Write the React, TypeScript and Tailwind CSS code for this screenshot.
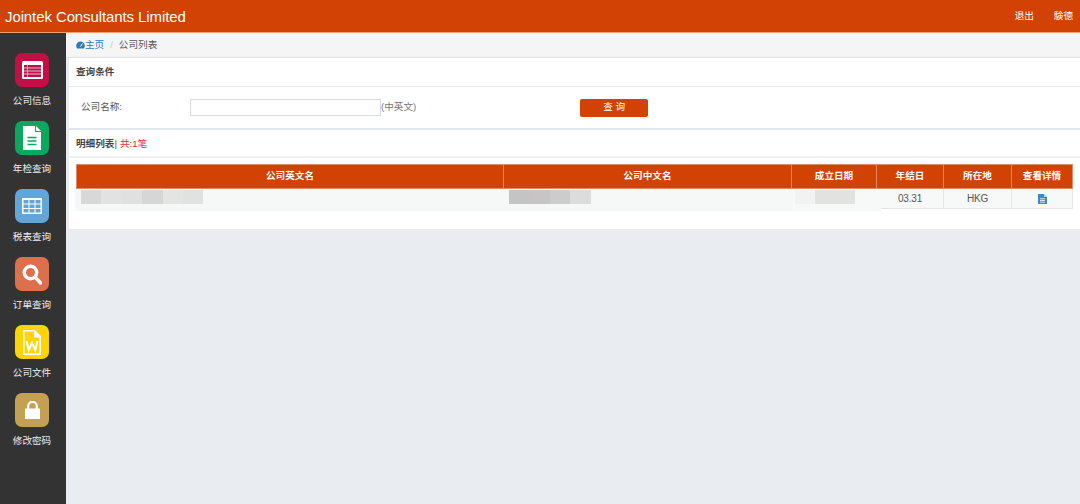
import type { ReactNode } from "react"

const FormIcon = () => (
  <svg width="21" height="18" viewBox="0 0 21 18">
    <rect width="21" height="18" rx="1.5" fill="#fff" />
    <rect x="2" y="4" width="17" height="12" fill="#c20f45" />
    <path d="M2 7h17M2 10h17M2 13h17" stroke="#f4b6c8" strokeWidth="1" />
    <path d="M5.5 4v12" stroke="#f4b6c8" strokeWidth="0.8" />
  </svg>
)

const DocIcon = () => (
  <svg width="18" height="24" viewBox="0 0 18 24">
    <path d="M0 0h12v6h6v18H0z" fill="#fff" />
    <path d="M13 0l5 5h-5z" fill="#fff" />
    <path d="M4.5 11.5h9M4.5 15h9M4.5 18.5h9" stroke="#0aa85e" strokeWidth="1.6" />
  </svg>
)

const GridIcon = () => (
  <svg width="20" height="16" viewBox="0 0 20 16">
    <rect width="20" height="16" rx="1" fill="#fff" />
    <path d="M1.5 2h5v3.5h-5zM7.5 2h5v3.5h-5zM13.5 2h5v3.5h-5zM1.5 6.5h5V10h-5zM7.5 6.5h5V10h-5zM13.5 6.5h5V10h-5zM1.5 11h5v3.5h-5zM7.5 11h5v3.5h-5zM13.5 11h5v3.5h-5z" fill="#62a6d8" />
  </svg>
)

const SearchIcon = () => (
  <svg width="20" height="21" viewBox="0 0 20 21" fill="none" stroke="#fff">
    <circle cx="8.5" cy="8.5" r="6.2" strokeWidth="3.4" />
    <path d="M13.5 13.5l5 5.5" strokeWidth="3.4" strokeLinecap="round" />
  </svg>
)

const WordIcon = () => (
  <svg width="18" height="25" viewBox="0 0 18 25" fill="none">
    <path d="M0.8 0.8h10.7l5.7 5.7v17.7H0.8z" stroke="#fff" strokeWidth="1.6" />
    <path d="M11 1v6.5h6.5z" fill="#fff" />
    <path d="M3.5 11l2.2 9 3.3-7 3.3 7 2.2-9" stroke="#fff" strokeWidth="2.1" />
  </svg>
)

const LockIcon = () => (
  <svg width="15" height="18" viewBox="0 0 15 18" fill="none">
    <path d="M3.2 9V5.2a4.3 4.3 0 0 1 8.6 0V9" stroke="#fff" strokeWidth="2.2" />
    <rect y="7.5" width="15" height="10.5" rx="0.5" fill="#fff" />
  </svg>
)

const GaugeIcon = () => (
  <svg width="9" height="8" viewBox="0 0 9 8">
    <path d="M4.5 0.5a4.3 4.3 0 0 0-4.3 4.3c0 1 .3 1.9.9 2.7h6.8c.6-.8.9-1.7.9-2.7A4.3 4.3 0 0 0 4.5 0.5z" fill="#337ab7" />
    <path d="M4.5 5.5L6.5 2.5" stroke="#fff" strokeWidth="1" />
  </svg>
)

const FileIcon = () => (
  <svg width="9" height="10" viewBox="0 0 9 10">
    <path d="M0 0h5.5L9 3.2V10H0z" fill="#3a8cc6" />
    <path d="M6 0l3 3H6z" fill="#a8cde8" />
    <path d="M2 4.8h5M2 6.5h5M2 8.2h5" stroke="#fff" strokeWidth="0.8" />
  </svg>
)

const navItems: { label: string; bg: string; icon: ReactNode }[] = [
  { label: "公司信息", bg: "bg-[#c20f45]", icon: <FormIcon /> },
  { label: "年检查询", bg: "bg-[#0aa85e]", icon: <DocIcon /> },
  { label: "税表查询", bg: "bg-[#62a6d8]", icon: <GridIcon /> },
  { label: "订单查询", bg: "bg-[#dc6f4c]", icon: <SearchIcon /> },
  { label: "公司文件", bg: "bg-[#ffd400]", icon: <WordIcon /> },
  { label: "修改密码", bg: "bg-[#c4a052]", icon: <LockIcon /> },
]

const columns = [
  { label: "公司英文名", width: "w-[427px]" },
  { label: "公司中文名", width: "w-[288px]" },
  { label: "成立日期", width: "w-[85px]" },
  { label: "年结日", width: "w-[67px]" },
  { label: "所在地", width: "w-[68px]" },
  { label: "查看详情", width: "w-[61px]" },
]

const Mosaic = ({ colors, cell }: { colors: string[]; cell: string }) => (
  <div className="flex h-[14px]">
    {colors.map((c, i) => (
      <div key={i} className={cell} style={{ backgroundColor: c }} />
    ))}
  </div>
)

const App = () => {
  return (
    <div className="flex h-[504px] w-[1080px] flex-col overflow-hidden bg-[#e9edf2] font-['Liberation_Sans','Noto_Sans_CJK_SC',sans-serif] text-[9.6px] text-[#555]">
      {/* Top bar */}
      <header className="flex h-[33px] shrink-0 items-center justify-between border-b border-[#e8a080] bg-[#d14204] pl-[5px] pr-[7px] text-white">
        <span className="text-[15px] leading-none tracking-[-0.1px]">Jointek Consultants Limited</span>
        <div className="flex gap-[20px]">
          <a>退出</a>
          <a>験徳</a>
        </div>
      </header>

      <div className="flex min-h-0 flex-1">
        {/* Sidebar */}
        <aside className="flex w-[66px] shrink-0 flex-col items-center gap-[13px] bg-[#333] pr-[2px] pt-[20px]">
          {navItems.map((item) => (
            <div key={item.label} className="flex flex-col items-center gap-[6px]">
              <div className={`flex h-[34px] w-[34px] items-center justify-center rounded-[7px] ${item.bg}`}>
                {item.icon}
              </div>
              <span className="h-[15px] leading-[15px] text-[#eee]">{item.label}</span>
            </div>
          ))}
        </aside>

        <main className="min-w-0 flex-1">
          {/* Breadcrumb */}
          <nav className="flex h-[25px] items-center border-b border-[#dcdfe6] bg-[#f5f5f5] pl-[10px] text-[#555]">
            <GaugeIcon />
            <span className="text-[#337ab7]">主页</span>
            <span className="ml-[6px] text-[#ccc]">/</span>
            <span className="ml-[6px]">公司列表</span>
          </nav>

          <div className="ml-[3px] h-[171px] bg-white">
            <div className="flex h-[29px] items-center border-b border-[#e6e8ee] pl-[7px] font-bold text-[#444]">
              查询条件
            </div>
            <div className="flex h-[43px] items-center border-b-2 border-[#e3e5ec] pl-[12px]">
              <span className="w-[109px]">公司名称:</span>
              <input className="h-[17px] w-[191px] border border-[#d6d9e0] bg-white" />
              <span className="text-[#777]">(中英文)</span>
              <button className="ml-[164px] h-[18px] w-[68px] rounded-[2px] bg-[#d14204] text-white">
                查 询
              </button>
            </div>
            <div className="flex h-[28px] items-center border-b-2 border-[#f0f1f5] pl-[7px] pt-[3px]">
              <span className="font-bold text-[#444]">明细列表</span>
              <span>|</span>
              <span className="ml-[3px] text-[#f01e2c]">共:1笔</span>
            </div>

            <div className="relative pl-[7px] pt-[6px]">
              <table className="w-[996px] table-fixed border-collapse border border-[#ddd]">
                <thead>
                  <tr className="h-[24px] bg-[#d14204] font-bold text-white">
                    {columns.map((col) => (
                      <th key={col.label} className={`${col.width} border border-[#e08a66] p-0`}>
                        {col.label}
                      </th>
                    ))}
                  </tr>
                </thead>
                <tbody>
                  <tr className="h-[20px] bg-[#f7f8f8] text-center text-[10px] tracking-[-0.2px]">
                    <td className="border border-[#e3e5e8]" />
                    <td className="border border-[#e3e5e8]" />
                    <td className="border border-[#e3e5e8]" />
                    <td className="border border-[#e3e5e8]">03.31</td>
                    <td className="border border-[#e3e5e8]">HKG</td>
                    <td className="border border-[#e3e5e8]">
                      <div className="flex justify-center">
                        <FileIcon />
                      </div>
                    </td>
                  </tr>
                </tbody>
              </table>

              {/* blurred out cells */}
              <div className="absolute left-[6px] top-[31px] h-[22px] w-[720px] bg-[#f6f7f7]" />
              <div className="absolute left-[12px] top-[32px]">
                <Mosaic cell="h-[14px] w-[20.4px]" colors={["#d8d8d8", "#e2e2e2", "#e0e0e0", "#d6d6d6", "#e4e4e2", "#dfe2e0"]} />
              </div>
              <div className="absolute left-[440px] top-[32px]">
                <Mosaic cell="h-[14px] w-[20.4px]" colors={["#c4c4c4", "#c6c4c4", "#cccccc", "#dcdcdc"]} />
              </div>
              <div className="absolute left-[724px] top-[31px] h-[22px] w-[88px] bg-[#f7f8f8]" />
              <div className="absolute left-[726px] top-[32px]">
                <Mosaic cell="h-[14px] w-[20px]" colors={["#f2f2f2", "#e2e2e0", "#e2e2e0"]} />
              </div>
            </div>
          </div>
        </main>
      </div>
    </div>
  )
}

export default App
